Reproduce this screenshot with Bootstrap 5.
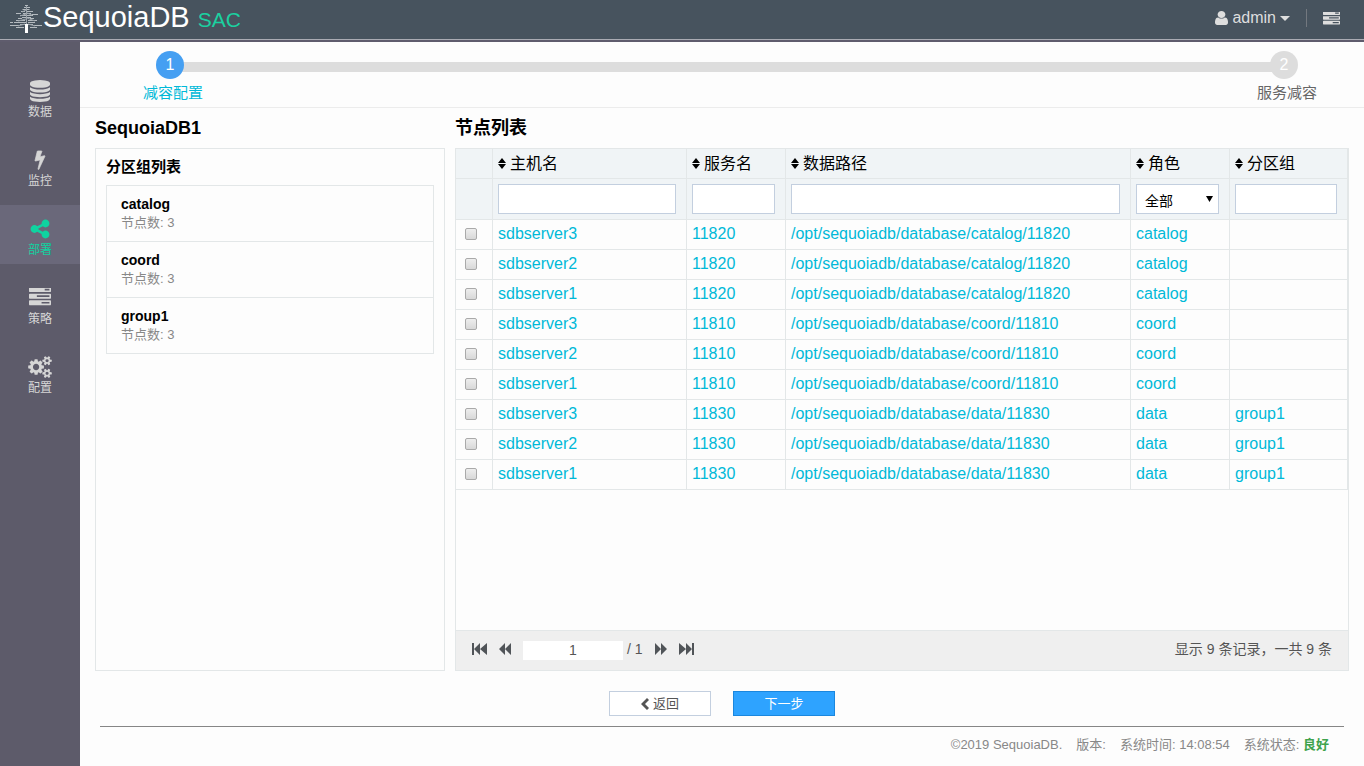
<!DOCTYPE html>
<html lang="zh-CN">
<head>
<meta charset="utf-8">
<meta name="viewport" content="width=device-width, initial-scale=1">
<title>SequoiaDB SAC</title>
<link href="https://cdn.jsdelivr.net/npm/bootstrap@5.3.0/dist/css/bootstrap.min.css" rel="stylesheet">
<style>
  body { font-family: "Liberation Sans", "Noto Sans CJK SC", sans-serif; font-size: 14px; line-height: 20px; color: #000; background: #fdfdfd; }
  a { text-decoration: none; }
  svg { display: block; fill: currentColor; }
  .topbar { height: 42px; background: #47535e; border-bottom: 2px solid #5f5c6d; box-shadow: inset 0 -1px #aaabb3; color: #dedede; font-size: 16px; }
  .brand-name { font-size: 29px; line-height: 34px; color: #fff; }
  .brand-sub { font-size: 21px; color: #1bd1a0; }
  .user-btn { color: #dedede; font-size: 16px; line-height: 20px; }
  .rule { width: 1px; height: 18px; background: #73787f; }
  .side { width: 80px; background: #5d5b6a; padding-top: 25px; gap: 10px; }
  .side a { height: 59px; color: #d6d6d6; font-size: 12px; line-height: 16px; padding-top: 13px; gap: 2px; }
  .side a.current { background: #6a687a; color: #0fd3a0; }
  .side .pic { height: 22px; }
  .steps { height: 66px; border-bottom: 1px solid #ececec; padding: 9px 47px 0 63px; }
  .step { width: 60px; font-size: 15px; color: #666; z-index: 1; }
  .step.on { color: #00b9d8; }
  .dot { width: 28px; height: 28px; margin-right: 6px; background: #ddd; color: #fff; font-size: 16px; line-height: 28px; }
  .step.on .dot { background: #459ff2; }
  .step-text { padding-top: 4px; }
  .track { height: 10px; background: #ddd; margin: 11px -32px 0 -24px; }
  .work { padding: 7px 15px 0; gap: 10px; }
  .left { width: 350px; }
  .heading { font-size: 18px; line-height: 26px; margin: 0 0 7px; font-weight: 700; }
  .frame { border: 1px solid #e3e7e8; background: #fdfdfd; }
  .group-pane { padding: 8px 10px; }
  .sub { font-size: 15px; line-height: 20px; font-weight: 700; margin: 0 0 8px; }
  .groups { --bs-list-group-border-color: #e3e7e8; --bs-list-group-bg: #fdfdfd; --bs-list-group-border-radius: 0; }
  .groups li { padding: 9px 14px; line-height: 19px; color: #000; }
  .groups li small { display: block; font-size: 13px; line-height: 18px; color: #888; }
  .nodes { width: 100%; table-layout: fixed; border-collapse: separate; border-spacing: 0; font-size: 16px; line-height: 24px; }
  .nodes th, .nodes td { height: 30px; padding: 0 5px; border: 0 solid #e3e7e8; border-width: 0 1px 1px 0; vertical-align: middle; overflow: hidden; white-space: nowrap; }
  .nodes th { font-weight: 400; background: #f0f4f6; }
  .nodes .filters th { height: 41px; padding-right: 10px; }
  .nodes a { color: #00b9d8; }
  .nodes tbody td { padding-bottom: 2px; }
  .nodes tbody .pick { padding: 0 6px 2px 0; line-height: 12px; }
  .field { display: block; width: 100%; height: 30px; border: 1px solid #c3cfdf; border-radius: 0; background: #fff; padding: 0 8px; font-size: 14px; }
  select.field { appearance: none; padding-top: 3px; }
  .drop { right: 6px; top: 12px; pointer-events: none; }
  .tick { appearance: none; display: block; width: 12px; height: 12px; border: 1px solid #aaa; border-radius: 2px; background: linear-gradient(#eee, #d8d8d8); margin: 0 auto; }
  .tick:checked { background: #459ff2; }
  .pager { background: #efefef; border-top: 1px solid #e3e7e8; height: 40px; padding: 0 16px 3px; color: #555; }
  .pager button { color: #505458; }
  .pager .mid { margin: 0 12px; }
  .pageno { width: 100px; height: 19px; margin-top: 2px; border: 0; background: #fff; text-align: center; color: #555; }
  .actions { gap: 22px; margin-top: 20px; }
  .act { width: 102px; height: 25px; font-size: 13px; line-height: 18px; padding: 0; border-radius: 0; }
  .act-back { border-color: #c3cfdf; background: #fff; color: #555; }
  .act-next { border-color: #1b87de; background: #2ea3ff; color: #fff; }
  .foot { margin: 10px 20px 0; border-top: 1px solid #868686; height: 40px; padding: 8px 15px 0 0; gap: 14px; font-size: 13px; color: #888; }
  .foot b { color: #3fa34d; }
</style>
</head>
<body>
<svg width="0" height="0" class="position-absolute" aria-hidden="true">
  <symbol id="sort" viewBox="0 0 8 11"><path d="M4 0l4 5H0zM4 11L0 6h8z"/></symbol>
  <symbol id="tasks" viewBox="0 0 1792 1408" preserveAspectRatio="none"><path d="M1024 1216h640v-128h-640v128zm-384-512h1024v-128h-1024v128zm640-512h384v-128h-384v128zm512 832v256q0 26-19 45t-45 19h-1664q-26 0-45-19t-19-45v-256q0-26 19-45t45-19h1664q26 0 45 19t19 45zm0-512v256q0 26-19 45t-45 19h-1664q-26 0-45-19t-19-45v-256q0-26 19-45t45-19h1664q26 0 45 19t19 45zm0-512v256q0 26-19 45t-45 19h-1664q-26 0-45-19t-19-45v-256q0-26 19-45t45-19h1664q26 0 45 19t19 45z"/></symbol>
</svg>
<div class="min-vh-100 d-flex flex-column">
  <header class="topbar d-flex align-items-start">
    <a href="#" class="d-flex align-items-baseline ps-2 text-white">
      <svg class="align-self-start mt-1 flex-shrink-0" width="35" height="30" viewBox="0 0 35 30" fill="none" stroke="#b4babf" stroke-width="1">
        <path d="M17 1.500h3M16 3.500h6M14.500 5.500h7M13 7.500h4M19 7.500h6M15 9.500h8M8 9.500h5M24 10.500h6M12 11.500h13M14 13.500h9M10 14.500h4M22 14.500h4M8 16.500h9M20 16.500h9M6 18.500h13M20 18.500h7M2 18.500h3M12 20.500h13M2 21.500h9M25 21.500h9M8 23.500h8M22 23.500h7"/>
        <path d="M18.500 2v18M18 6l-4 2M18 10l-6 2M19 9l5 2M18 15l-8 2M19 14l8 3M17 20l-7 2M20 20l7 2" stroke-width="1" stroke="#9aa2a9"/>
        <path d="M18.500 20v9" stroke="#fff" stroke-width="3"/>
      </svg>
      <span class="brand-name">SequoiaDB</span>
      <span class="brand-sub ms-2">SAC</span>
    </a>
    <div class="ms-auto d-flex align-items-center me-4 pt-2">
      <button type="button" class="user-btn border-0 bg-transparent p-0 d-flex align-items-center">
        <svg class="me-1" width="13" height="14" viewBox="256 128 1280 1536" preserveAspectRatio="none"><path d="M1536 1399q0 109-62.500 187t-150.500 78h-854q-88 0-150.500-78t-62.500-187q0-85 8.500-160.500t31.500-152 58.500-131 94-89 134.500-34.500q131 128 313 128t313-128q76 0 134.500 34.500t94 89 58.500 131 31.500 152 8.500 160.500zm-256-887q0 159-112.500 271.500t-271.500 112.500-271.500-112.500-112.500-271.500 112.500-271.500 271.500-112.500 271.500 112.500 112.500 271.500z"/></svg>
        <span>admin</span>
        <svg class="ms-1" width="10" height="5" viewBox="0 0 10 5"><path d="M0 0h10L5 5z"/></svg>
      </button>
      <span class="rule mx-3"></span>
      <a href="#" aria-label="任务" class="text-reset"><svg width="17" height="13"><use href="#tasks"/></svg></a>
    </div>
  </header>
  <div class="flex-grow-1 d-flex">
    <nav class="side flex-shrink-0 d-flex flex-column">
      <a href="#" class="d-flex flex-column align-items-center"><span class="pic"><svg width="20" height="22" viewBox="128 0 1536 1792" preserveAspectRatio="none"><path d="M896 768q237 0 443-43t325-127v170q0 69-103 128t-280 93.500-385 34.500-385-34.500-280-93.500-103-128v-170q119 84 325 127t443 43zm0 768q237 0 443-43t325-127v170q0 69-103 128t-280 93.500-385 34.500-385-34.500-280-93.500-103-128v-170q119 84 325 127t443 43zm0-384q237 0 443-43t325-127v170q0 69-103 128t-280 93.500-385 34.500-385-34.500-280-93.500-103-128v-170q119 84 325 127t443 43zm0-1152q208 0 385 34.500t280 93.500 103 128v128q0 69-103 128t-280 93.500-385 34.500-385-34.500-280-93.500-103-128v-128q0-69 103-128t280-93.500 385-34.500z"/></svg></span>数据</a>
      <a href="#" class="d-flex flex-column align-items-center"><span class="pic"><svg width="20" height="21" viewBox="0 0 1792 1792"><path d="M1333 566q18 20 7 44l-540 1157q-13 25-42 25-4 0-14-2-17-5-25.500-19t-4.500-30l197-808-406 101q-4 1-12 1-18 0-31-11-18-15-13-39l201-825q4-14 16-23t28-9h328q19 0 32 12.500t13 29.500q0 8-5 18l-171 463 396-98q8-2 12-2 19 0 34 15z" stroke="currentColor" stroke-width="60"/></svg></span>监控</a>
      <a href="#" class="current d-flex flex-column align-items-center"><span class="pic"><svg width="22" height="22" viewBox="0 0 1792 1792"><path d="M1344 1024q133 0 226.500 93.500t93.500 226.500-93.500 226.500-226.500 93.500-226.500-93.500-93.500-226.500q0-12 2-34l-360-180q-92 86-218 86-133 0-226.500-93.500t-93.500-226.500 93.500-226.500 226.500-93.500q126 0 218 86l360-180q-2-22-2-34 0-133 93.500-226.500t226.500-93.500 226.500 93.500 93.500 226.500-93.500 226.500-226.500 93.500q-126 0-218-86l-360 180q2 22 2 34t-2 34l360 180q92-86 218-86z"/></svg></span>部署</a>
      <a href="#" class="d-flex flex-column align-items-center"><span class="pic d-flex align-items-start"><svg class="mt-n1" style="margin-top:1px" width="22" height="18"><use href="#tasks"/></svg></span>策略</a>
      <a href="#" class="d-flex flex-column align-items-center"><span class="pic"><svg width="24" height="22" viewBox="0 0 1920 1792"><path d="M896 896q0-106-75-181t-181-75-181 75-75 181 75 181 181 75 181-75 75-181zm768 512q0-52-38-90t-90-38-90 38-38 90q0 53 37.500 90.500t90.500 37.500 90.500-37.500 37.500-90.500zm0-1024q0-52-38-90t-90-38-90 38-38 90q0 53 37.500 90.500t90.500 37.500 90.500-37.500 37.500-90.500zm-384 421v185q0 10-7 19.500t-16 10.500l-155 24q-11 35-32 76 34 48 90 115 7 11 7 20 0 12-7 19-23 30-82.500 89.500t-78.500 59.500q-11 0-21-7l-115-90q-37 19-77 31-11 108-23 155-7 24-30 24h-186q-11 0-20-7.500t-10-17.500l-23-153q-34-10-75-31l-118 89q-7 7-20 7-11 0-21-8-144-133-144-160 0-9 7-19 10-14 41-53t47-61q-23-44-35-82l-152-24q-10-1-17-9.500t-7-19.500v-185q0-10 7-19.500t16-10.500l155-24q11-35 32-76-34-48-90-115-7-11-7-20 0-12 7-20 22-30 82-89t79-59q11 0 21 7l115 90q34-18 77-32 11-108 23-154 7-24 30-24h186q11 0 20 7.500t10 17.500l23 153q34 10 75 31l118-89q8-7 20-7 11 0 21 8 144 133 144 160 0 8-7 19-12 16-42 54t-45 60q23 48 34 82l152 23q10 2 17 10.500t7 19.500zm640 533v140q0 16-149 31-12 27-30 52 51 113 51 138 0 4-4 7-122 71-124 71-8 0-46-47t-52-68q-20 2-30 2t-30-2q-14 21-52 68t-46 47q-2 0-124-71-4-3-4-7 0-25 51-138-18-25-30-52-149-15-149-31v-140q0-16 149-31 13-29 30-52-51-113-51-138 0-4 4-7 4-2 35-20t59-34 30-16q8 0 46 46.500t52 67.500q20-2 30-2t30 2q51-71 92-112l6-2q4 0 124 70 4 3 4 7 0 25-51 138 17 23 30 52 149 15 149 31zm0-1024v140q0 16-149 31-12 27-30 52 51 113 51 138 0 4-4 7-122 71-124 71-8 0-46-47t-52-68q-20 2-30 2t-30-2q-14 21-52 68t-46 47q-2 0-124-71-4-3-4-7 0-25 51-138-18-25-30-52-149-15-149-31v-140q0-16 149-31 13-29 30-52-51-113-51-138 0-4 4-7 4-2 35-20t59-34 30-16q8 0 46 46.500t52 67.500q20-2 30-2t30 2q51-71 92-112l6-2q4 0 124 70 4 3 4 7 0 25-51 138 17 23 30 52 149 15 149 31z"/></svg></span>配置</a>
    </nav>
    <main class="flex-grow-1 d-flex flex-column">
      <div class="steps d-flex">
        <div class="step on flex-shrink-0 d-flex flex-column align-items-center"><span class="dot rounded-circle text-center">1</span><span class="step-text">减容配置</span></div>
        <div class="track flex-grow-1"></div>
        <div class="step flex-shrink-0 d-flex flex-column align-items-center"><span class="dot rounded-circle text-center">2</span><span class="step-text">服务减容</span></div>
      </div>
      <div class="work flex-grow-1 d-flex">
        <section class="left flex-shrink-0 d-flex flex-column">
          <h1 class="heading">SequoiaDB1</h1>
          <div class="frame group-pane flex-grow-1">
            <h2 class="sub">分区组列表</h2>
            <ul class="list-group groups">
              <li class="list-group-item"><b>catalog</b><small>节点数: 3</small></li>
              <li class="list-group-item"><b>coord</b><small>节点数: 3</small></li>
              <li class="list-group-item"><b>group1</b><small>节点数: 3</small></li>
            </ul>
          </div>
        </section>
        <section class="flex-grow-1 d-flex flex-column">
          <h1 class="heading">节点列表</h1>
          <div class="frame flex-grow-1 d-flex flex-column">
            <div class="flex-grow-1">
              <table class="nodes">
                <colgroup><col style="width:37px"><col style="width:194px"><col style="width:99px"><col><col style="width:99px"><col style="width:118px"></colgroup>
                <thead>
                  <tr>
                    <th></th>
                    <th><span class="d-flex align-items-center gap-1"><svg width="8" height="11"><use href="#sort"/></svg>主机名</span></th>
                    <th><span class="d-flex align-items-center gap-1"><svg width="8" height="11"><use href="#sort"/></svg>服务名</span></th>
                    <th><span class="d-flex align-items-center gap-1"><svg width="8" height="11"><use href="#sort"/></svg>数据路径</span></th>
                    <th><span class="d-flex align-items-center gap-1"><svg width="8" height="11"><use href="#sort"/></svg>角色</span></th>
                    <th><span class="d-flex align-items-center gap-1"><svg width="8" height="11"><use href="#sort"/></svg>分区组</span></th>
                  </tr>
                  <tr class="filters">
                    <th></th>
                    <th><input class="field" type="text" aria-label="主机名"></th>
                    <th><input class="field" type="text" aria-label="服务名"></th>
                    <th><input class="field" type="text" aria-label="数据路径"></th>
                    <th><div class="position-relative"><select class="field" aria-label="角色"><option>全部</option><option>catalog</option><option>coord</option><option>data</option></select><svg class="drop position-absolute" width="7" height="6" viewBox="0 0 7 6"><path d="M0 0h7L3.500 6z"/></svg></div></th>
                    <th><input class="field" type="text" aria-label="分区组"></th>
                  </tr>
                </thead>
                <tbody>
                  <tr><td class="pick"><input class="tick" type="checkbox" aria-label="sdbserver3:11820"></td><td><a href="#">sdbserver3</a></td><td><a href="#">11820</a></td><td><a href="#">/opt/sequoiadb/database/catalog/11820</a></td><td><a href="#">catalog</a></td><td></td></tr>
                  <tr><td class="pick"><input class="tick" type="checkbox" aria-label="sdbserver2:11820"></td><td><a href="#">sdbserver2</a></td><td><a href="#">11820</a></td><td><a href="#">/opt/sequoiadb/database/catalog/11820</a></td><td><a href="#">catalog</a></td><td></td></tr>
                  <tr><td class="pick"><input class="tick" type="checkbox" aria-label="sdbserver1:11820"></td><td><a href="#">sdbserver1</a></td><td><a href="#">11820</a></td><td><a href="#">/opt/sequoiadb/database/catalog/11820</a></td><td><a href="#">catalog</a></td><td></td></tr>
                  <tr><td class="pick"><input class="tick" type="checkbox" aria-label="sdbserver3:11810"></td><td><a href="#">sdbserver3</a></td><td><a href="#">11810</a></td><td><a href="#">/opt/sequoiadb/database/coord/11810</a></td><td><a href="#">coord</a></td><td></td></tr>
                  <tr><td class="pick"><input class="tick" type="checkbox" aria-label="sdbserver2:11810"></td><td><a href="#">sdbserver2</a></td><td><a href="#">11810</a></td><td><a href="#">/opt/sequoiadb/database/coord/11810</a></td><td><a href="#">coord</a></td><td></td></tr>
                  <tr><td class="pick"><input class="tick" type="checkbox" aria-label="sdbserver1:11810"></td><td><a href="#">sdbserver1</a></td><td><a href="#">11810</a></td><td><a href="#">/opt/sequoiadb/database/coord/11810</a></td><td><a href="#">coord</a></td><td></td></tr>
                  <tr><td class="pick"><input class="tick" type="checkbox" aria-label="sdbserver3:11830"></td><td><a href="#">sdbserver3</a></td><td><a href="#">11830</a></td><td><a href="#">/opt/sequoiadb/database/data/11830</a></td><td><a href="#">data</a></td><td><a href="#">group1</a></td></tr>
                  <tr><td class="pick"><input class="tick" type="checkbox" aria-label="sdbserver2:11830"></td><td><a href="#">sdbserver2</a></td><td><a href="#">11830</a></td><td><a href="#">/opt/sequoiadb/database/data/11830</a></td><td><a href="#">data</a></td><td><a href="#">group1</a></td></tr>
                  <tr><td class="pick"><input class="tick" type="checkbox" aria-label="sdbserver1:11830"></td><td><a href="#">sdbserver1</a></td><td><a href="#">11830</a></td><td><a href="#">/opt/sequoiadb/database/data/11830</a></td><td><a href="#">data</a></td><td><a href="#">group1</a></td></tr>
                </tbody>
              </table>
            </div>
            <div class="pager d-flex align-items-center">
              <button type="button" class="border-0 bg-transparent p-0" aria-label="首页"><svg width="15" height="12" viewBox="0 0 15 12"><path d="M0 0h2v12H0zM8 0v12L2 6zM15 0v12L8 6z"/></svg></button>
              <button type="button" class="mid border-0 bg-transparent p-0" aria-label="上一页"><svg width="12" height="12" viewBox="0 0 12 12"><path d="M6 0v12L0 6zM12 0v12L6 6z"/></svg></button>
              <input class="pageno" type="text" value="1" aria-label="页码">
              <span class="ms-1">/ 1</span>
              <button type="button" class="mid border-0 bg-transparent p-0" aria-label="下一页"><svg width="12" height="12" viewBox="0 0 12 12"><path d="M0 0l6 6-6 6zM6 0l6 6-6 6z"/></svg></button>
              <button type="button" class="border-0 bg-transparent p-0" aria-label="末页"><svg width="15" height="12" viewBox="0 0 15 12"><path d="M0 0l7 6-7 6zM7 0l6 6-6 6zM13 0h2v12h-2z"/></svg></button>
              <span class="ms-auto">显示 9 条记录，一共 9 条</span>
            </div>
          </div>
        </section>
      </div>
      <div class="actions d-flex justify-content-center">
        <button type="button" class="btn act act-back d-flex align-items-center justify-content-center gap-1"><svg width="8" height="12" viewBox="0 0 8 12"><path d="M6 0l2 2-4 4 4 4-2 2-6-6z"/></svg>返回</button>
        <button type="button" class="btn act act-next">下一步</button>
      </div>
      <footer class="foot d-flex justify-content-end">
        <span>©2019 SequoiaDB.</span><span>版本:</span><span>系统时间: 14:08:54</span><span>系统状态: <b>良好</b></span>
      </footer>
    </main>
  </div>
</div>
<script src="https://cdn.jsdelivr.net/npm/bootstrap@5.3.0/dist/js/bootstrap.bundle.min.js"></script>
</body>
</html>
